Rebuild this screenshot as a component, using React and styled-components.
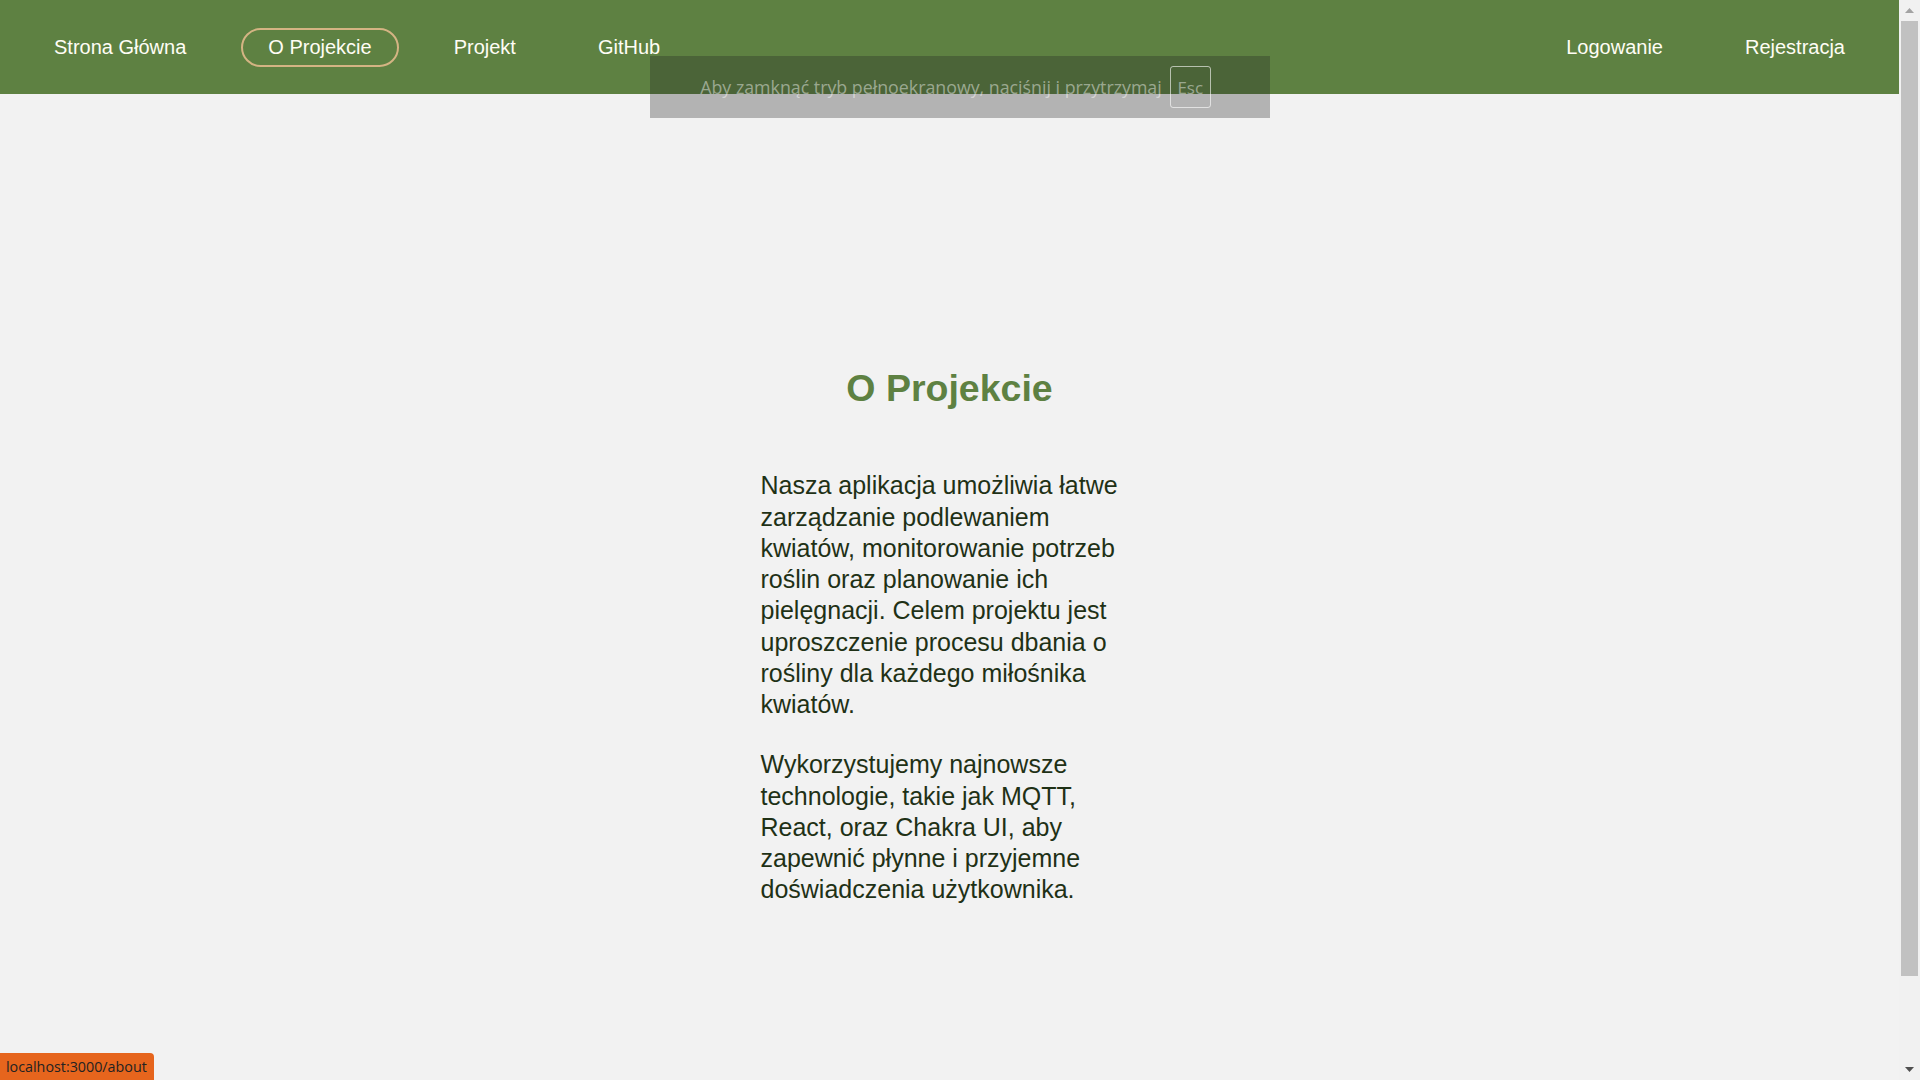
import React from 'react';
import styled, { createGlobalStyle } from 'styled-components';

const GREEN = '#5e8142';
const SCROLLBAR_WIDTH = 21;

const GlobalStyle = createGlobalStyle`
  html, body {
    margin: 0;
    height: 100%;
    overflow: hidden;
    background: #f2f2f2;
  }
  body {
    font-family: 'Liberation Sans', Arial, sans-serif;
  }
`;

const Viewport = styled.div`
  position: relative;
  display: flex;
  height: 100vh;
  width: 100vw;
`;

const Page = styled.div`
  flex: 1;
  min-width: 0;
  overflow: hidden;
  background: #f2f2f2;
`;

const Navbar = styled.nav`
  display: flex;
  align-items: center;
  justify-content: space-between;
  height: 94px;
  padding: 0 27px;
  box-sizing: border-box;
  background-color: ${GREEN};
`;

const NavGroup = styled.div`
  display: flex;
  align-items: center;
  gap: 28px;
`;

const NavLink = styled.a`
  padding: 6px 25px;
  border: 2px solid ${(p) => (p.$active ? '#d4b483' : 'transparent')};
  border-radius: 999px;
  color: #fffdf5;
  font-size: 20px;
  line-height: 23px;
  text-decoration: none;
  cursor: pointer;
`;

const Main = styled.main`
  display: flex;
  flex-direction: column;
  align-items: center;
  justify-content: center;
  height: 100vh;
  padding-top: 4px;
  box-sizing: border-box;
`;

const Title = styled.h1`
  margin: 0 0 59px;
  font-size: 37.5px;
  line-height: 45px;
  font-weight: 700;
  color: ${GREEN};
`;

const TextBlock = styled.div`
  width: 378px;
`;

const Paragraph = styled.p`
  margin: 0;
  font-size: 25px;
  line-height: 31.25px;
  color: #1f3116;

  & + & {
    margin-top: 29px;
  }
`;

const FullscreenBubble = styled.div`
  position: absolute;
  top: 56px;
  left: 50%;
  transform: translateX(-50%);
  width: 620px;
  height: 62px;
  display: flex;
  align-items: center;
  justify-content: center;
  gap: 8px;
  padding-right: 9px;
  box-sizing: border-box;
  background: rgba(34, 34, 34, 0.3);
  font-family: 'Open Sans', 'Noto Sans', sans-serif;
  font-size: 17.8px;
  color: rgba(255, 255, 255, 0.45);
`;

const KeyCap = styled.span`
  display: flex;
  align-items: center;
  justify-content: center;
  width: 41px;
  height: 42px;
  box-sizing: border-box;
  border: 1px solid rgba(255, 255, 255, 0.6);
  border-radius: 3px;
  font-size: 17px;
`;

const StatusBubble = styled.div`
  position: absolute;
  left: 0;
  bottom: 0;
  height: 27px;
  padding: 0 7px 0 6px;
  display: flex;
  align-items: center;
  background: #e6651d;
  border-top-right-radius: 4px;
  font-family: 'Open Sans', 'Noto Sans', sans-serif;
  font-size: 14.3px;
  color: #222;
`;

const Scrollbar = styled.div`
  display: flex;
  flex-direction: column;
  width: ${SCROLLBAR_WIDTH}px;
  flex: 0 0 ${SCROLLBAR_WIDTH}px;
  background: #f1f1f1;
`;

const ArrowButton = styled.div`
  display: flex;
  align-items: center;
  justify-content: center;
  height: 21px;
  flex: 0 0 21px;
`;

const Track = styled.div`
  flex: 1;
  padding: 0 2px;
`;

const Thumb = styled.div`
  height: 92%;
  background: #c1c1c1;
`;

const Arrow = ({ down, color }) => (
  <svg width="9" height="5" viewBox="0 0 9 5">
    <polygon points={down ? '0,0 9,0 4.5,5' : '0,5 9,5 4.5,0'} fill={color} />
  </svg>
);

export default function App() {
  return (
    <>
      <GlobalStyle />
      <Viewport>
        <Page>
          <Navbar>
            <NavGroup>
              <NavLink>Strona Główna</NavLink>
              <NavLink $active>O Projekcie</NavLink>
              <NavLink>Projekt</NavLink>
              <NavLink>GitHub</NavLink>
            </NavGroup>
            <NavGroup>
              <NavLink>Logowanie</NavLink>
              <NavLink>Rejestracja</NavLink>
            </NavGroup>
          </Navbar>
          <Main>
            <Title>O Projekcie</Title>
            <TextBlock>
              <Paragraph>
                Nasza aplikacja umożliwia łatwe zarządzanie podlewaniem kwiatów,
                monitorowanie potrzeb roślin oraz planowanie ich pielęgnacji.
                Celem projektu jest uproszczenie procesu dbania o rośliny dla
                każdego miłośnika kwiatów.
              </Paragraph>
              <Paragraph>
                Wykorzystujemy najnowsze technologie, takie jak MQTT, React, oraz
                Chakra UI, aby zapewnić płynne i przyjemne doświadczenia
                użytkownika.
              </Paragraph>
            </TextBlock>
          </Main>
        </Page>
        <Scrollbar>
          <ArrowButton>
            <Arrow color="#a3a3a3" />
          </ArrowButton>
          <Track>
            <Thumb />
          </Track>
          <ArrowButton>
            <Arrow down color="#505050" />
          </ArrowButton>
        </Scrollbar>
        <FullscreenBubble>
          <span>Aby zamknąć tryb pełnoekranowy, naciśnij i przytrzymaj</span>
          <KeyCap>Esc</KeyCap>
        </FullscreenBubble>
        <StatusBubble>localhost:3000/about</StatusBubble>
      </Viewport>
    </>
  );
}
